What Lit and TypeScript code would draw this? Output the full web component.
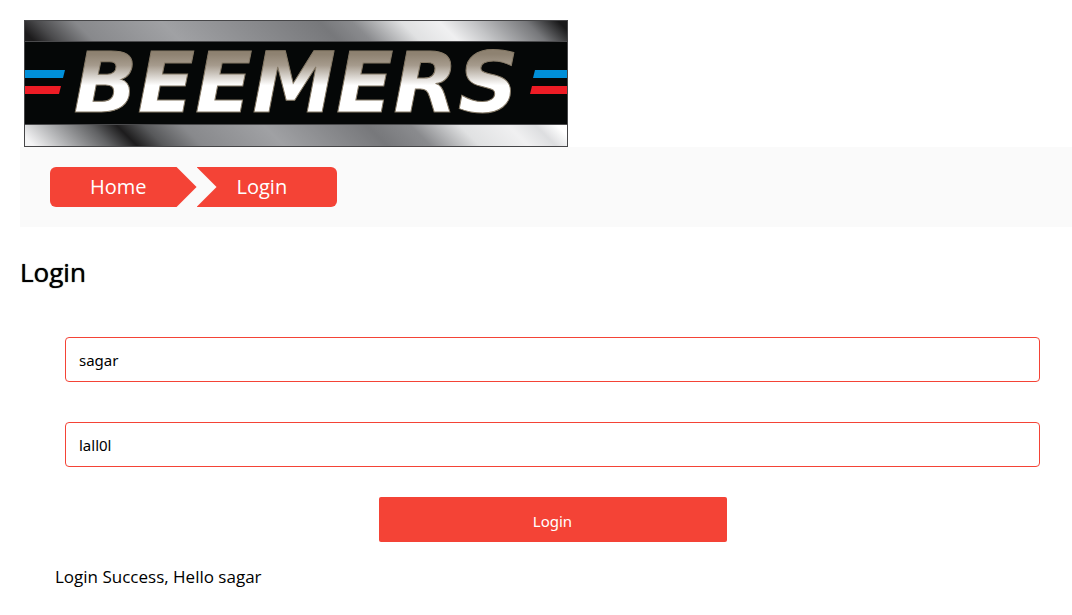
import { LitElement, html, css, svg } from "lit";
import { customElement, state } from "lit/decorators.js";

@customElement("beemers-logo")
class BeemersLogo extends LitElement {
  static styles = css`
    :host {
      display: block;
    }
    .logo {
      display: block;
      width: 100%;
      height: auto;
    }
    .word {
      font-family: "DejaVu Sans", sans-serif;
      font-weight: 700;
      font-style: italic;
      font-size: 84px;
    }
  `;

  render() {
    return html`
      <svg class="logo" viewBox="0 0 544 127" role="img" aria-label="Beemers">
        ${svg`
        <defs>
          <linearGradient id="top" gradientUnits="userSpaceOnUse" x1="0" y1="11" x2="272" y2="-261">
            <stop offset="0" stop-color="#1c1b1c"/>
            <stop offset="0.04" stop-color="#4a4a4c"/>
            <stop offset="0.11" stop-color="#88898c"/>
            <stop offset="0.27" stop-color="#a0a1a4"/>
            <stop offset="0.56" stop-color="#77787b"/>
            <stop offset="0.62" stop-color="#8a8b8e"/>
            <stop offset="0.71" stop-color="#e0e1e2"/>
            <stop offset="0.78" stop-color="#f0f0f1"/>
            <stop offset="0.84" stop-color="#c5c6c8"/>
            <stop offset="0.94" stop-color="#77787b"/>
            <stop offset="1" stop-color="#19191a"/>
          </linearGradient>
          <linearGradient id="bottom" gradientUnits="userSpaceOnUse" x1="0" y1="116" x2="272" y2="-156">
            <stop offset="0" stop-color="#f4f4f5"/>
            <stop offset="0.06" stop-color="#b4b5b7"/>
            <stop offset="0.14" stop-color="#616264"/>
            <stop offset="0.19" stop-color="#1d1c1d"/>
            <stop offset="0.24" stop-color="#58595b"/>
            <stop offset="0.31" stop-color="#88898c"/>
            <stop offset="0.46" stop-color="#a0a1a4"/>
            <stop offset="0.65" stop-color="#77787b"/>
            <stop offset="0.73" stop-color="#8a8b8e"/>
            <stop offset="0.82" stop-color="#e0e1e2"/>
            <stop offset="0.91" stop-color="#f0f0f1"/>
            <stop offset="0.96" stop-color="#dddee0"/>
            <stop offset="1" stop-color="#ffffff"/>
          </linearGradient>
          <linearGradient id="metal" gradientUnits="userSpaceOnUse" x1="0" y1="34" x2="0" y2="91">
            <stop offset="0" stop-color="#8e8271"/>
            <stop offset="0.2" stop-color="#a69b8d"/>
            <stop offset="0.55" stop-color="#ffffff"/>
            <stop offset="1" stop-color="#ffffff"/>
          </linearGradient>
        </defs>
        <rect width="544" height="127" fill="#050707"/>
        <rect x="1" y="1" width="542" height="20" fill="url(#top)"/>
        <rect x="1" y="105" width="542" height="21" fill="url(#bottom)"/>
        <path d="M1 21.5H543M1 104.5H543" stroke="#4a4a4c"/>
        <path d="M1 50H41L39 58H1ZM511 50H543V58H509Z" fill="#008fd9"/>
        <path d="M1 66H37L35 74H1ZM508 66H543V74H506Z" fill="#ee1c25"/>
        <text class="word" x="272" y="92" text-anchor="middle" fill="url(#metal)" stroke="#857966" stroke-width="1">BEEMERS</text>
        <rect x="0.5" y="0.5" width="543" height="126" fill="none" stroke="#464648"/>
        `}
      </svg>
    `;
  }
}

@customElement("app-root")
class AppRoot extends LitElement {
  @state() private user = "sagar";
  @state() private code = "lall0l";
  @state() private message = "Login Success, Hello sagar";

  static styles = css`
    :host {
      display: block;
      box-sizing: border-box;
      padding: 20px 0 20px 20px;
      font-family: "Open Sans", sans-serif;
      font-size: 16px;
      color: #000;
    }
    .brand {
      width: 544px;
      max-width: 100%;
      margin-left: 4px;
    }
    .crumbs {
      display: flex;
      padding: 20px 30px;
      background: #fafafa;
    }
    .crumb {
      box-sizing: border-box;
      height: 40px;
      background: #f44336;
      color: #fff;
      font-size: 20px;
      line-height: 40px;
      text-decoration: none;
    }
    .first {
      padding: 0 50px 0 40px;
      border-radius: 6px 0 0 6px;
      clip-path: polygon(0 0, calc(100% - 20px) 0, 100% 50%, calc(100% - 20px) 100%, 0 100%);
    }
    .last {
      padding: 0 50px 0 40px;
      border-radius: 0 6px 6px 0;
      clip-path: polygon(0 0, 100% 0, 100% 100%, 0 100%, 20px 50%);
    }
    .title {
      margin: 27px 0 47px;
      font-size: 26px;
      line-height: 36px;
      font-weight: 400;
      text-shadow: 0 0 1px #000;
    }
    .form {
      display: flex;
      flex-direction: column;
      margin: 0 32px 0 45px;
    }
    .field {
      box-sizing: border-box;
      width: 100%;
      height: 45px;
      margin-bottom: 40px;
      padding: 0 13px;
      border: 1px solid #f44336;
      border-radius: 4px;
      background: #fff;
      color: #000;
      font-family: "Noto Sans", sans-serif;
      font-size: 15px;
      outline: none;
    }
    .submit {
      align-self: center;
      width: 348px;
      max-width: 100%;
      height: 45px;
      margin-top: -10px;
      padding: 2px 0 0;
      border: 0;
      border-radius: 2px;
      background: #f44336;
      color: #fff;
      font-family: "Noto Sans", sans-serif;
      font-size: 15px;
      cursor: pointer;
    }
    .message {
      margin: 24px 0 0 35px;
      font-size: 17px;
      line-height: 22px;
    }
  `;

  private submit(event: Event) {
    event.preventDefault();
    this.message = `Login Success, Hello ${this.user}`;
  }

  render() {
    return html`
      <beemers-logo class="brand"></beemers-logo>
      <nav class="crumbs" aria-label="Breadcrumb">
        <a class="crumb first" href="#home">Home</a>
        <a class="crumb last" href="#login">Login</a>
      </nav>
      <main>
        <h1 class="title">Login</h1>
        <form class="form" @submit=${this.submit}>
          <input class="field" type="text" aria-label="Username" .value=${this.user}
            @input=${(e: Event) => (this.user = (e.target as HTMLInputElement).value)} />
          <input class="field" type="text" aria-label="Password" .value=${this.code}
            @input=${(e: Event) => (this.code = (e.target as HTMLInputElement).value)} />
          <button class="submit" type="submit">Login</button>
        </form>
        <p class="message" role="status">${this.message}</p>
      </main>
    `;
  }
}
